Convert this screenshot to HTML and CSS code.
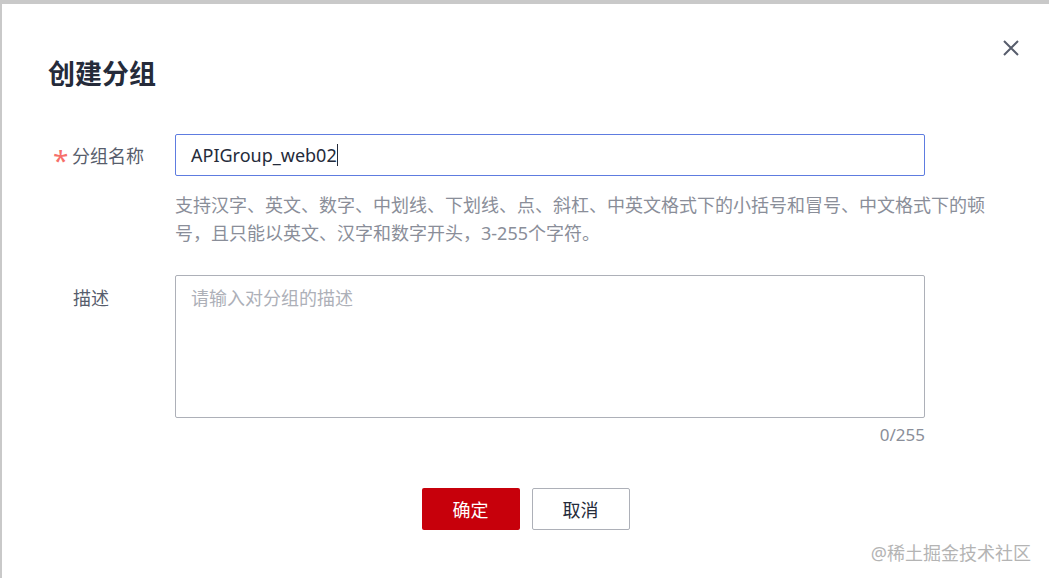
FILE: index.html
```html
<!DOCTYPE html>
<html lang="zh-CN">
<head>
    <meta charset="UTF-8">
    <title>创建分组</title>
    <link rel="stylesheet" href="styles.css">
</head>
<body>

<!-- 创建分组弹窗 -->
<div class="dialog">
    <span class="close">
        <svg width="18" height="18" viewBox="0 0 18 18"><path d="M2 2L16 16M16 2L2 16" stroke="#575d6c" stroke-width="2" fill="none"/></svg>
    </span>

    <h3 class="dialog-title">创建分组</h3>

    <form class="dialog-form">
        <div class="form-row">
            <label class="form-label"><span class="required">*</span>分组名称</label>
            <div class="form-field">
                <div class="text-input">APIGroup_web02<span class="caret"></span></div>
                <p class="help">支持汉字、英文、数字、中划线、下划线、点、斜杠、中英文格式下的小括号和冒号、中文格式下的顿号，且只能以英文、汉字和数字开头，3-255个字符。</p>
            </div>
        </div>

        <div class="form-row form-row-desc">
            <label class="form-label label-plain">描述</label>
            <div class="form-field">
                <textarea class="textarea" placeholder="请输入对分组的描述"></textarea>
                <div class="counter">0/255</div>
            </div>
        </div>
    </form>

    <div class="dialog-footer">
        <button type="button" class="btn btn-primary">确定</button>
        <button type="button" class="btn btn-secondary">取消</button>
    </div>

    <div class="watermark">@稀土掘金技术社区</div>
</div>

</body>
</html>
```

FILE: styles.css
```css
*{margin:0;padding:0;box-sizing:border-box;font-family:"Noto Sans","Noto Sans CJK SC",sans-serif}
body{background:#c9c9c9;color:#252b3a;overflow:hidden}

.dialog {
    position: relative;
    margin: 4px 0 0 2px;
    height: calc(100vh - 4px);
    background: #fff;
    padding: 52px 0 0 46px;
}

.close {
    position: absolute;
    top: 35px;
    right: 29px;
    width: 18px;
    height: 18px;
    display: flex;
    cursor: pointer;
}

.dialog-title {
    font-size: 27px;
    font-weight: bold;
    line-height: 36px;
    color: #252b3a;
    margin-bottom: 42px;
}

.form-row {
    display: flex;
    align-items: flex-start;
}

.form-row-desc {
    margin-top: 28px;
}

.form-label {
    width: 127px;
    flex-shrink: 0;
    display: flex;
    align-items: center;
    height: 42px;
    font-size: 18px;
    color: #575d6c;
    padding-left: 5px;
}

.form-label .required {
    color: #f66f6a;
    width: 19px;
    font-size: 28px;
    line-height: 28px;
    padding-top: 10px;
}

.label-plain {
    padding-left: 25px;
    height: 28px;
    margin-top: 8px;
}

.form-field {
    width: 826px;
}

.text-input {
    width: 750px;
    height: 42px;
    border: 1px solid #5e7ce0;
    border-radius: 2px;
    padding: 0 15px;
    font-size: 18px;
    line-height: 40px;
    color: #252b3a;
}

.caret {
    display: inline-block;
    width: 1px;
    height: 22px;
    background: #252b3a;
    vertical-align: -4px;
}

.help {
    margin-top: 15px;
    font-size: 18px;
    line-height: 28px;
    color: #8a8e99;
}

.textarea {
    display: block;
    width: 750px;
    height: 143px;
    border: 1px solid #adb0b8;
    border-radius: 2px;
    padding: 8px 15px;
    font-size: 18px;
    line-height: 28px;
    color: #252b3a;
    resize: none;
    outline: none;
}

.textarea::placeholder {
    color: #adb0b8;
}

.counter {
    width: 750px;
    margin-top: 5px;
    text-align: right;
    font-size: 17px;
    line-height: 24px;
    color: #8a8e99;
}

.dialog-footer {
    display: flex;
    justify-content: center;
    gap: 12px;
    margin: 41px 0 0 -46px;
}

.btn {
    width: 98px;
    height: 42px;
    border-radius: 2px;
    font-size: 18px;
    cursor: pointer;
}

.btn-primary {
    background: #c7000b;
    color: #fff;
    border: none;
}

.btn-secondary {
    background: #fff;
    color: #252b3a;
    border: 1px solid #adb0b8;
}

.watermark {
    position: absolute;
    right: 18px;
    bottom: 13px;
    font-size: 18px;
    line-height: 24px;
    color: #b4b4b4;
}
```
